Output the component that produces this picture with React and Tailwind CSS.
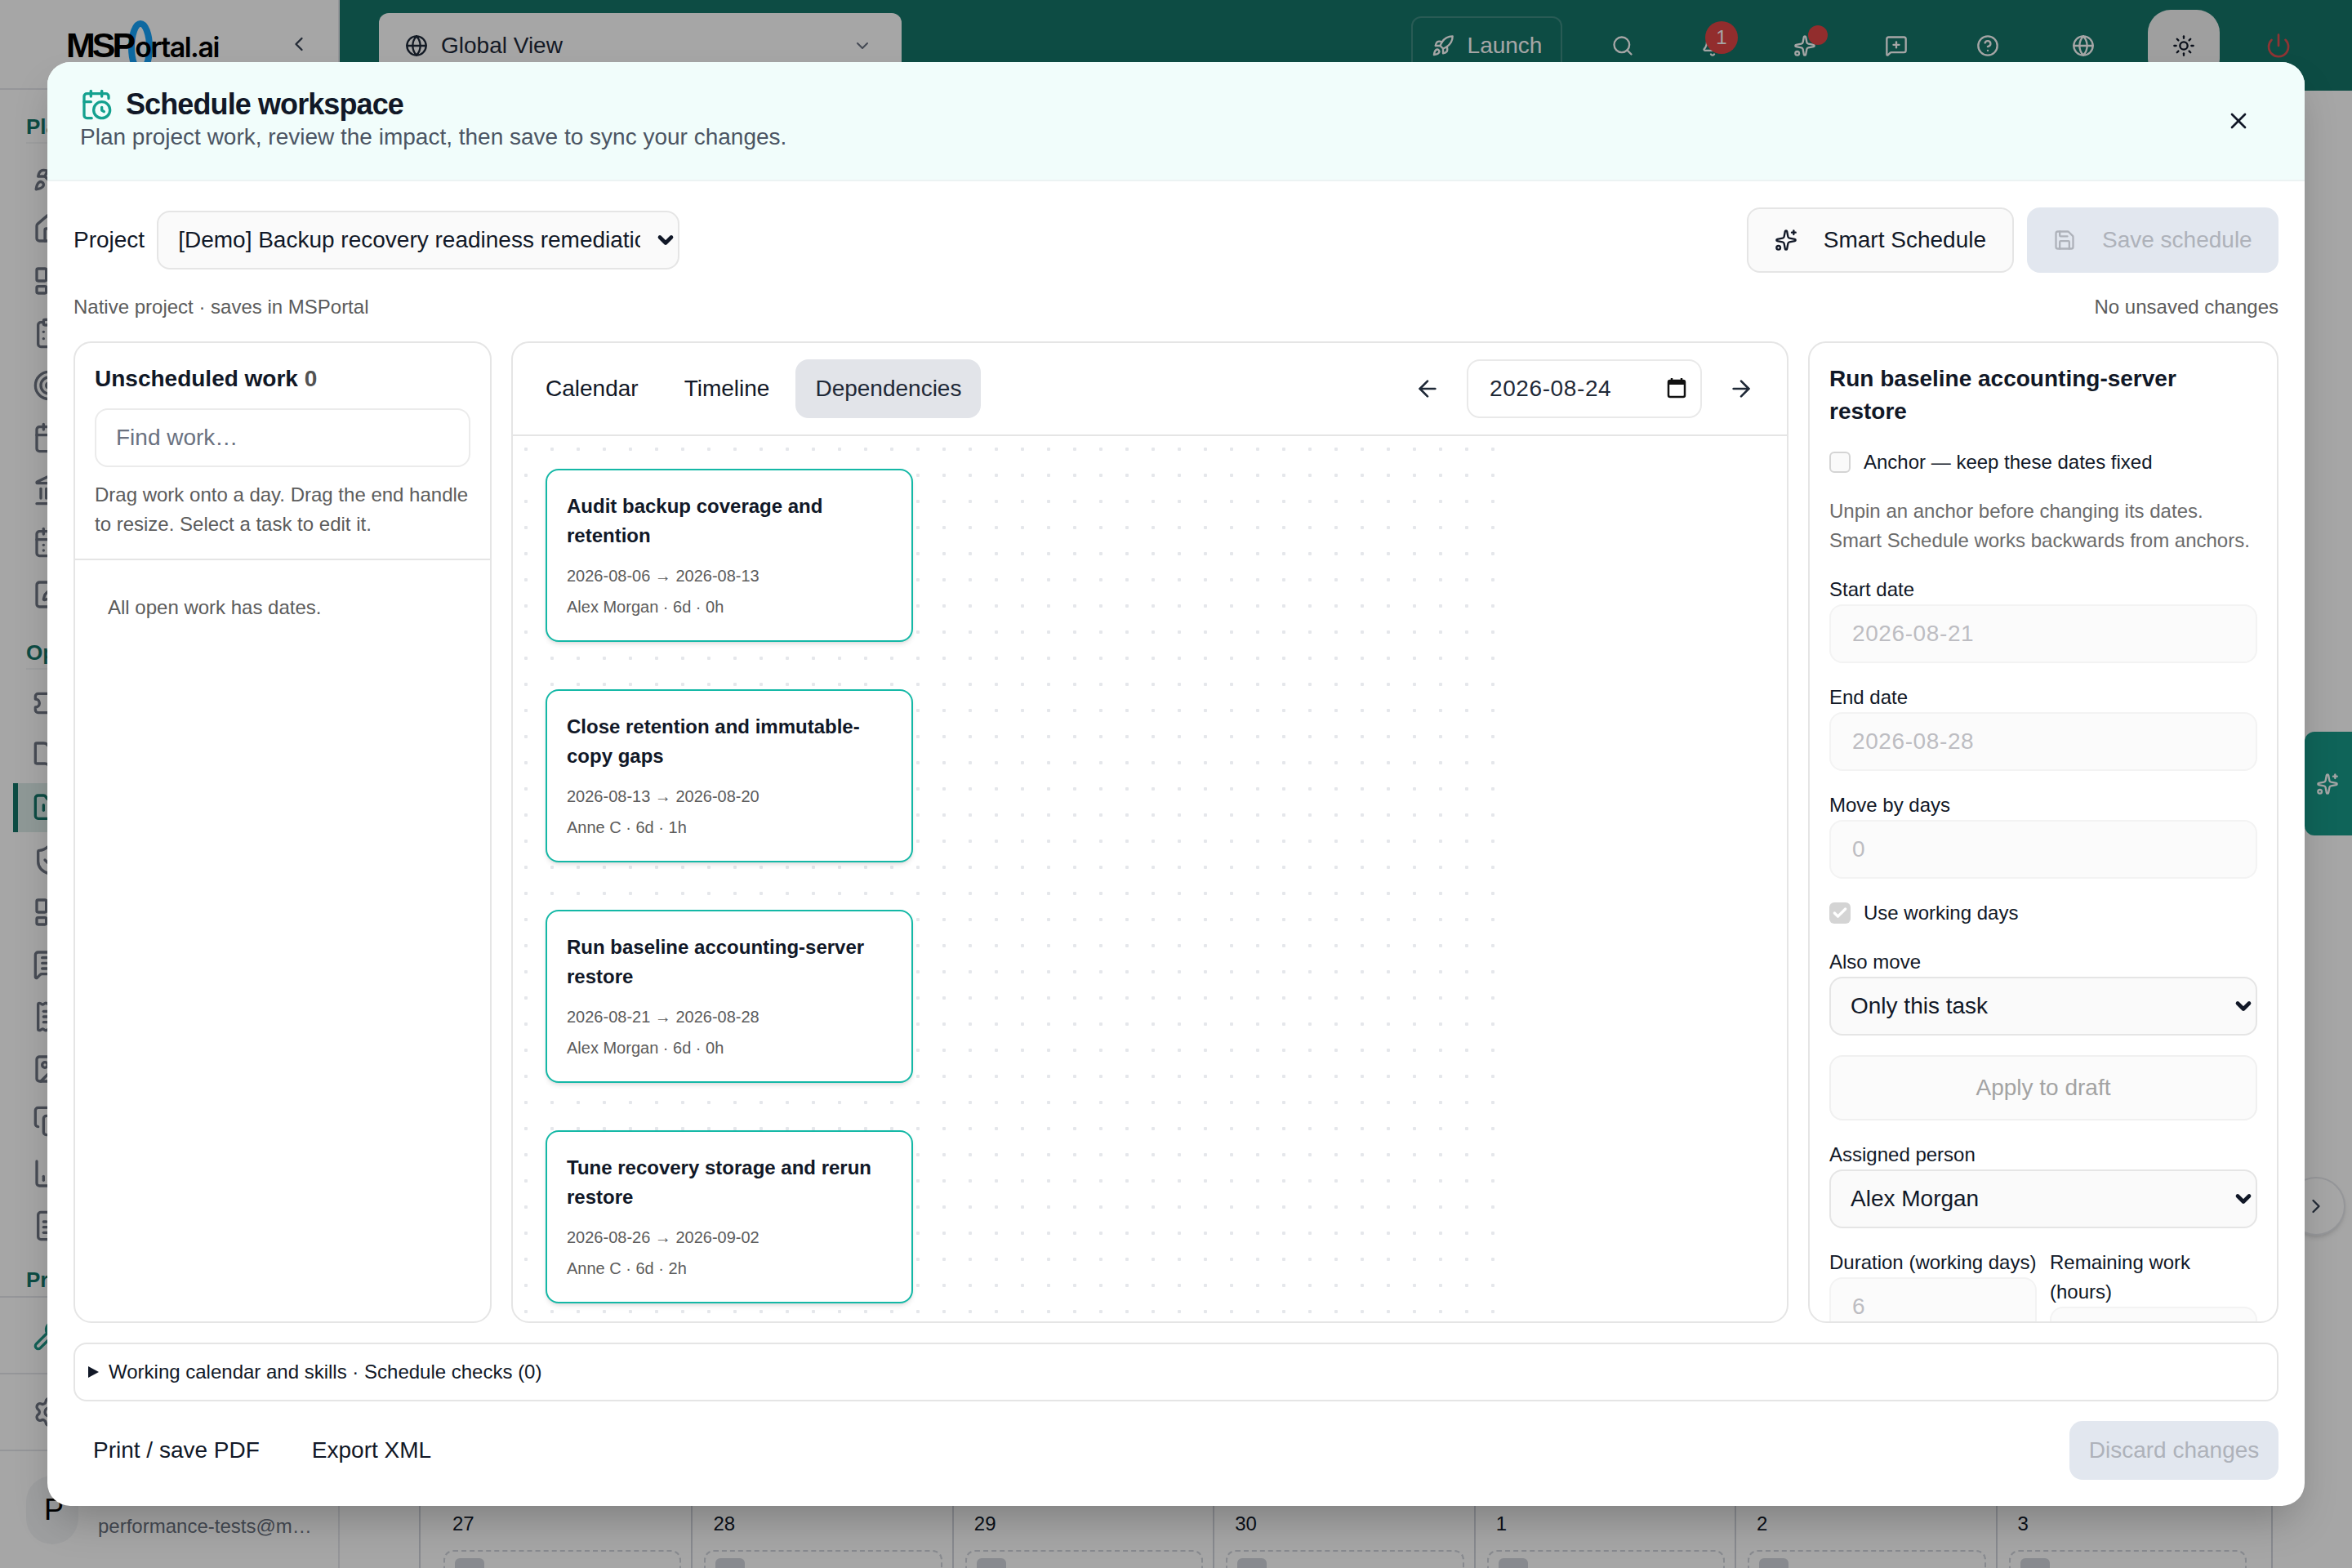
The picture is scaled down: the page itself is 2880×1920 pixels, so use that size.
import {
  ArrowLeft, ArrowRight, Bell, BookOpen, CalendarClock, CalendarDays, Calendar, ChartColumn, Check, ChevronDown, ChevronLeft, ChevronRight,
  CircleHelp, ClipboardList, Copy, FileText, FolderKanban, Globe, House, Image, Landmark, LayoutDashboard, MessageSquarePlus,
  MessageSquareText, Power, ReceiptText, Rocket, Save, Search, Settings, ShieldCheck, Sparkles, SquarePen, Sun, Target, Ticket, Wrench, X,
} from 'lucide-react'

const PLAN_ICONS = [Rocket, House, LayoutDashboard, ClipboardList, Target, Calendar, Landmark, CalendarDays, SquarePen]
const OPS_ICONS = [Ticket, BookOpen, FolderKanban, ShieldCheck, LayoutDashboard, MessageSquareText, ReceiptText, Image, Copy, ChartColumn, FileText]
const DAYS = ['27', '28', '29', '30', '1', '2', '3']

const CARDS = [
  { title: 'Audit backup coverage and retention', dates: '2026-08-06 → 2026-08-13', meta: 'Alex Morgan · 6d · 0h' },
  { title: 'Close retention and immutable-copy gaps', dates: '2026-08-13 → 2026-08-20', meta: 'Anne C · 6d · 1h' },
  { title: 'Run baseline accounting-server restore', dates: '2026-08-21 → 2026-08-28', meta: 'Alex Morgan · 6d · 0h' },
  { title: 'Tune recovery storage and rerun restore', dates: '2026-08-26 → 2026-09-02', meta: 'Anne C · 6d · 2h' },
]

function Sidebar() {
  return (
    <aside className="w-[416px] shrink-0 h-full flex flex-col border-r-2 border-gray-200 bg-white">
      <div className="relative h-[110px] shrink-0 border-b-2 border-gray-200 flex items-center pl-[81px] pr-[34px] justify-between">
        <svg className="absolute left-[157px] top-[25px]" width="30" height="66" viewBox="0 0 30 66">
          <ellipse cx="15" cy="33" rx="11" ry="29" fill="none" stroke="#16a2f8" strokeWidth="8" />
        </svg>
        <div className="relative flex items-baseline pt-[2px] text-black">
          <span className="text-[43px] font-bold tracking-[-4px]">MSP</span>
          <span className="ml-[3px] text-[34px] font-semibold tracking-[-1.5px] [font-family:Inter,sans-serif]">ortal.ai</span>
        </div>
        <ChevronLeft className="w-7 h-7 text-gray-700" />
      </div>
      <div className="flex-1 flex flex-col pl-8">
        <div className="mt-[26px] h-[40px] border-b-2 border-gray-100 text-[26px] font-bold text-[#147569]">Planning</div>
        <div className="flex flex-col gap-6 pl-2 mt-[20px]">
          {PLAN_ICONS.map((Icon, i) => <Icon key={i} className="w-10 h-10 text-[#6f7683]" />)}
        </div>
        <div className="mt-[32px] h-[40px] border-b-2 border-gray-100 text-[26px] font-bold text-[#147569]">Operations</div>
        <div className="flex flex-col gap-6 pl-2 mt-[21px]">
          {OPS_ICONS.map((Icon, i) => (
            <div key={i} className="relative">
              {i === 2 && <div className="absolute left-[-24px] top-[-10px] w-[380px] h-[60px] border-l-[6px] border-[#147569] bg-[#dcebe8]" />}
              <Icon className={`relative w-10 h-10 ${i === 2 ? 'text-[#147569]' : 'text-[#6f7683]'}`} />
            </div>
          ))}
        </div>
        <div className="mt-[30px] text-[26px] leading-[32px] font-bold text-[#147569]">Projects</div>
      </div>
      <div className="-mt-[1px] h-[96px] border-y-2 border-gray-200 pl-10 flex items-center"><Wrench className="w-10 h-10 text-[#1c9686]" /></div>
      <div className="h-[94px] border-b-2 border-gray-200 pl-10 flex items-center"><Settings className="w-10 h-10 text-[#6f7683]" /></div>
      <div className="h-[143px] flex items-center pl-8 gap-6">
        <div className="w-16 h-[84px] shrink-0 rounded-full bg-gray-100 flex items-center justify-center pl-1 text-[36px] text-black">P</div>
        <div className="text-[24px] pt-[40px] whitespace-nowrap text-[#6b7280]">performance-tests@m…</div>
      </div>
    </aside>
  )
}

function TopBar() {
  const iconClass = 'w-7 h-7 text-white'
  return (
    <header className="h-[111px] shrink-0 bg-[#147569] flex items-center justify-between pl-[48px] pr-[74px]">
      <div className="w-[640px] h-[80px] self-start mt-4 rounded-xl bg-white flex items-center pl-8 pr-9 gap-4 text-[28px] text-gray-800">
        <Globe className="w-7 h-7" />
        <span className="flex-1">Global View</span>
        <ChevronDown className="w-6 h-6 text-gray-500" />
      </div>
      <div className="flex items-center">
        <div className="w-[185px] h-[72px] rounded-xl border-2 border-[#3f8d83] flex items-center justify-center gap-4 text-[28px] text-white mr-[60px]">
          <Rocket className={iconClass} /> Launch
        </div>
        <Search className={`${iconClass} mr-[82px]`} />
        <div className="relative mr-[85px]">
          <Bell className={iconClass} />
          <span className="absolute left-[5px] top-[-16px] w-[40px] h-[40px] rounded-full bg-[#e04545] text-white text-[24px] flex items-center justify-center">1</span>
        </div>
        <div className="relative mr-[84px]">
          <Sparkles className={iconClass} />
          <span className="absolute left-[18px] top-[-11px] w-[24px] h-[24px] rounded-full bg-[#e04545]" />
        </div>
        <MessageSquarePlus className={`${iconClass} mr-[84px]`} />
        <CircleHelp className={`${iconClass} mr-[89px]`} />
        <Globe className={`${iconClass} mr-[65px]`} />
        <div className="w-[88px] h-[88px] rounded-[28px] bg-[#f5f5f5] flex items-center justify-center mr-[56px]"><Sun className="w-7 h-7 text-gray-900" /></div>
        <Power className="w-8 h-8 text-[#dc5050]" />
      </div>
    </header>
  )
}

function CalendarBehind() {
  return (
    <div className="flex-1 pl-[97px] pr-[97px] bg-white">
      <div className="h-full flex flex-col justify-end border-x-2 border-gray-300 pl-[14px] pr-[18px]">
        <div className="flex h-[76px]">
          {DAYS.map((d, i) => (
            <div key={i} className={`flex-1 ${i < 6 ? 'border-r-2' : ''} border-gray-300 pl-[14px] pr-[12px] overflow-hidden`}>
              <div className="pl-[11px] text-[24px] leading-[44px] text-gray-900">{d}</div>
              <div className="mt-[10px] h-[60px] border-2 border-dashed border-gray-300 rounded-xl pl-3 pt-2">
                <div className="w-9 h-9 rounded-md bg-gray-300" />
              </div>
            </div>
          ))}
        </div>
      </div>
    </div>
  )
}

function SelectBox({ value, className = '' }) {
  return (
    <div className={`relative ${className}`}>
      <select className="appearance-none w-full h-full rounded-2xl border-2 border-[#e5e5e5] bg-[#fafafa] pl-[24px] pr-[46px] text-[28px] text-[#111827]">
        <option>{value}</option>
      </select>
      <ChevronDown strokeWidth={4} className="absolute right-[3px] top-1/2 -translate-y-1/2 w-[28px] h-[28px] text-[#111827] pointer-events-none" />
    </div>
  )
}

function ReadOnlyInput({ value, spaced = false }) {
  return (
    <input
      disabled
      readOnly
      value={value}
      className={`w-full h-[72px] rounded-2xl border-2 border-[#f3f3f3] bg-[#fbfbfb] px-[26px] text-[28px] text-[#bdbdc2] ${spaced ? 'tracking-[0.6px]' : ''}`}
    />
  )
}

function Field({ label, children }) {
  return (
    <div>
      <div className="text-[24px] leading-[36px] text-[#111827]">{label}</div>
      {children}
    </div>
  )
}

function LeftPanel() {
  return (
    <div className="rounded-[22px] border-2 border-[#e5e5e5] flex flex-col overflow-hidden">
      <div className="px-6 pt-6 pb-6 border-b-2 border-[#e5e5e5]">
        <h3 className="text-[28px] leading-[40px] font-bold text-[#111827]">Unscheduled work <span className="text-[#525252]">0</span></h3>
        <input placeholder="Find work…" className="mt-4 w-full h-[72px] rounded-2xl border-2 border-[#ebebeb] px-[24px] text-[28px] placeholder:text-[#6b7280]" />
        <p className="mt-4 text-[24px] leading-[36px] text-[#5c5c5c]">Drag work onto a day. Drag the end handle to resize. Select a task to edit it.</p>
      </div>
      <p className="pl-10 pt-10 text-[24px] leading-[36px] text-[#5c5c5c]">All open work has dates.</p>
    </div>
  )
}

function MiddlePanel() {
  return (
    <div className="rounded-[22px] border-2 border-[#e5e5e5] flex flex-col overflow-hidden min-w-0">
      <div className="h-[114px] shrink-0 border-b-2 border-[#e5e5e5] flex items-center px-4">
        <div className="flex gap-2 text-[28px]">
          <div className="px-6 h-[72px] flex items-center rounded-2xl text-[#111827]">Calendar</div>
          <div className="px-6 h-[72px] flex items-center rounded-2xl text-[#111827]">Timeline</div>
          <div className="px-6 h-[72px] flex items-center rounded-2xl text-[#1f2937] bg-[#e2e4e9]">Dependencies</div>
        </div>
        <div className="ml-auto flex items-center">
          <ArrowLeft className="w-8 h-8 text-[#1f2937] mr-8" />
          <div className="relative w-[288px] h-[72px] rounded-2xl border-2 border-[#e9e9e9] flex items-center pl-[26px] text-[28px] tracking-[0.6px] text-[#1f2937]">
            2026-08-24
            <svg className="absolute right-[17px] top-[20px]" width="24" height="26" viewBox="0 0 24 26">
              <path d="M6 1v4M18 1v4" stroke="#111" strokeWidth="2.5" />
              <rect x="2" y="4" width="20" height="20" rx="2" fill="none" stroke="#111" strokeWidth="2.5" />
              <rect x="2" y="4" width="20" height="5" fill="#111" />
            </svg>
          </div>
          <ArrowRight className="w-8 h-8 text-[#1f2937] ml-8 mr-6" />
        </div>
      </div>
      <div className="flex-1 min-h-0 overflow-hidden">
        <div className="w-[1216px] h-full pl-10 pt-10 flex flex-col gap-[58px] bg-[radial-gradient(circle,#e5e7eb_2px,transparent_2.5px)] bg-[size:32px_32px]">
          {CARDS.map(c => (
            <div key={c.title} className="w-[450px] h-[212px] shrink-0 rounded-2xl border-2 border-[#14b8a6] bg-white shadow-md px-6 pt-[26px]">
              <div className="text-[24px] leading-[36px] font-bold text-[#111827]">{c.title}</div>
              <div className="mt-3 text-[20px] leading-[38px] text-[#5c5c5c]">{c.dates}</div>
              <div className="text-[20px] leading-[38px] text-[#5c5c5c]">{c.meta}</div>
            </div>
          ))}
        </div>
      </div>
    </div>
  )
}

function RightPanel() {
  return (
    <div className="rounded-[22px] border-2 border-[#e5e5e5] overflow-hidden px-6 pt-6 flex flex-col gap-6">
      <h3 className="text-[28px] leading-[40px] font-bold text-[#111827]">Run baseline accounting-server restore</h3>
      <label className="flex items-center gap-[16px] text-[24px] leading-[36px] text-[#111827]">
        <input type="checkbox" disabled className="appearance-none w-[26px] h-[26px] rounded-md border-2 border-[#d4d4d4] bg-[#fafafa]" />
        Anchor — keep these dates fixed
      </label>
      <p className="text-[24px] leading-[36px] text-[#6b6b6b]">Unpin an anchor before changing its dates.<br />Smart Schedule works backwards from anchors.</p>
      <Field label="Start date"><ReadOnlyInput value="2026-08-21" spaced /></Field>
      <Field label="End date"><ReadOnlyInput value="2026-08-28" spaced /></Field>
      <Field label="Move by days"><ReadOnlyInput value="0" /></Field>
      <label className="flex items-center gap-[16px] text-[24px] leading-[36px] text-[#111827]">
        <span className="w-[26px] h-[26px] rounded-md bg-[#d4d4d4] flex items-center justify-center"><Check strokeWidth={4} className="w-5 h-5 text-white" /></span>
        Use working days
      </label>
      <Field label="Also move"><SelectBox value="Only this task" className="h-[72px]" /></Field>
      <button disabled className="h-[80px] shrink-0 rounded-2xl border-2 border-[#f0f0f0] bg-[#fbfbfb] text-[28px] text-[#a3a3a3]">Apply to draft</button>
      <Field label="Assigned person"><SelectBox value="Alex Morgan" className="h-[72px]" /></Field>
      <div className="grid grid-cols-2 gap-4">
        <Field label="Duration (working days)"><ReadOnlyInput value="6" /></Field>
        <Field label="Remaining work (hours)"><ReadOnlyInput value="1" /></Field>
      </div>
    </div>
  )
}

function Modal() {
  return (
    <div className="w-[2764px] h-[1768px] rounded-[28px] bg-white shadow-2xl overflow-hidden flex flex-col">
      <div className="h-[146px] shrink-0 bg-[#f1fdfb] border-b-2 border-[#ecf3f3] pl-[40px] pr-[65px] flex items-center justify-between">
        <div className="pb-[4px]">
          <div className="flex items-center gap-4">
            <CalendarClock className="w-10 h-10 text-[#14a18f]" />
            <h2 className="text-[36px] leading-[48px] font-bold tracking-tight text-[#111827]">Schedule workspace</h2>
          </div>
          <p className="-mt-[4px] text-[28px] leading-[40px] text-[#4b5563]">Plan project work, review the impact, then save to sync your changes.</p>
        </div>
        <X className="w-8 h-8 text-[#111827]" />
      </div>
      <div className="flex-1 min-h-0 p-8 flex flex-col">
        <div className="flex items-center justify-between h-[80px] shrink-0">
          <div className="flex items-center gap-[15px]">
            <span className="text-[28px] text-[#111827]">Project</span>
            <SelectBox value="[Demo] Backup recovery readiness remediation" className="w-[640px] h-[72px]" />
          </div>
          <div className="flex gap-4 h-full text-[28px]">
            <button className="px-8 rounded-2xl border-2 border-[#e5e5e5] bg-[#fafafa] flex items-center gap-8 text-[#111827]">
              <Sparkles className="w-7 h-7" /> Smart Schedule
            </button>
            <button disabled className="w-[308px] pl-8 rounded-2xl bg-[#e2e7ef] flex items-center gap-8 text-[#aeb2ba]">
              <Save className="w-7 h-7" /> Save schedule
            </button>
          </div>
        </div>
        <div className="mt-6 flex justify-between text-[24px] leading-[36px] text-[#5c5c5c]">
          <span>Native project · saves in MSPortal</span>
          <span>No unsaved changes</span>
        </div>
        <div className="mt-6 flex-1 min-h-0 grid grid-cols-[512px_1fr_576px] gap-6">
          <LeftPanel />
          <MiddlePanel />
          <RightPanel />
        </div>
        <div className="mt-6 h-[72px] shrink-0 rounded-2xl border-2 border-[#e5e5e5] flex items-center pl-4 gap-3 text-[24px] text-[#111827]">
          <svg width="13" height="14" viewBox="0 0 13 14"><path d="M0 0l13 7-13 7z" fill="#111827" /></svg>
          Working calendar and skills · Schedule checks (0)
        </div>
        <div className="mt-6 h-[72px] shrink-0 flex items-center justify-between">
          <div className="flex items-center gap-[64px] pl-6 text-[28px] text-[#111827]">
            <span>Print / save PDF</span>
            <span>Export XML</span>
          </div>
          <button disabled className="w-[256px] h-full rounded-2xl bg-[#e2e7ef] text-[28px] text-[#aeb2ba]">Discard changes</button>
        </div>
      </div>
    </div>
  )
}

export default function App() {
  return (
    <div className="relative w-[2880px] h-[1920px] overflow-hidden flex bg-white [font-family:'Liberation_Sans',Arial,sans-serif]">
      <Sidebar />
      <div className="flex-1 min-w-0 flex flex-col">
        <TopBar />
        <CalendarBehind />
      </div>

      <div className="absolute right-0 top-[896px] w-[58px] h-[127px] rounded-l-xl bg-[#179a89] flex items-center justify-end pr-[16px]">
        <Sparkles className="w-7 h-7 text-white" />
      </div>
      <div className="absolute right-[8px] top-[1441px] w-[72px] h-[72px] rounded-full bg-white border-2 border-gray-200 shadow-md flex items-center justify-center">
        <ChevronRight className="w-7 h-7 text-gray-700" />
      </div>

      <div className="absolute inset-0 bg-black/35 flex items-center justify-center">
        <Modal />
      </div>
    </div>
  )
}
